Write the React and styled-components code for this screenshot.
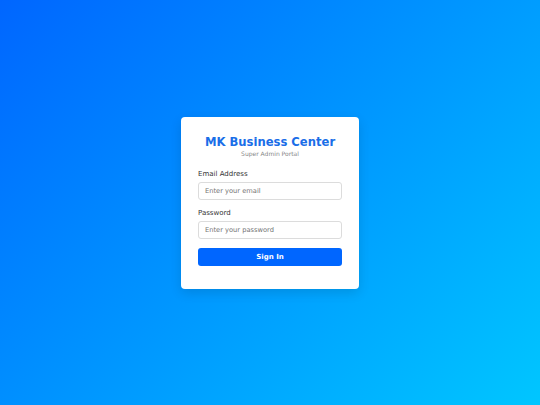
import React from "react";
import styled, { createGlobalStyle } from "styled-components";

const Global = createGlobalStyle`
  html, body { margin: 0; padding: 0; }
  body { font-family: "DejaVu Sans", sans-serif; }
  * { box-sizing: border-box; }
`;

const Page = styled.div`
  width: 540px;
  height: 405px;
  background: linear-gradient(135deg, #0066ff 0%, #00c6ff 100%);
  display: flex;
  align-items: center;
  justify-content: center;
`;

const Card = styled.div`
  width: 178px;
  background: #fff;
  border-radius: 4px;
  box-shadow: 0 4px 12px rgba(0, 0, 0, 0.12);
  padding: 17px 17px 23px;
  display: flex;
  flex-direction: column;
`;

const Header = styled.div`
  text-align: center;
  margin-bottom: 11px;
`;

const Title = styled.h1`
  margin: 0;
  font-size: 11.6px;
  line-height: 16px;
  font-weight: bold;
  color: #1a6ee8;
  white-space: nowrap;
`;

const Subtitle = styled.p`
  margin: 0;
  font-size: 6px;
  line-height: 8px;
  color: #888;
`;

const Field = styled.div`
  display: flex;
  flex-direction: column;
  margin-bottom: ${(p) => p.$mb || 8}px;
`;

const Label = styled.label`
  font-size: 7px;
  line-height: 10px;
  color: #333;
  margin-bottom: 3px;
`;

const Input = styled.input`
  height: 18px;
  border: 1px solid #dcdcdc;
  border-radius: 3px;
  padding: 0 6px;
  font-family: "DejaVu Sans", sans-serif;
  font-size: 6.7px;
  color: #333;
  outline: none;
  &::placeholder { color: #757575; }
`;

const Button = styled.button`
  height: 18px;
  border: none;
  border-radius: 3px;
  background: #0066ff;
  color: #fff;
  font-family: "DejaVu Sans", sans-serif;
  font-size: 7px;
  font-weight: bold;
  cursor: pointer;
`;

export default function App() {
  return (
    <>
      <Global />
      <Page>
        <Card>
          <Header>
            <Title>MK Business Center</Title>
            <Subtitle>Super Admin Portal</Subtitle>
          </Header>
          <Field>
            <Label>Email Address</Label>
            <Input type="email" placeholder="Enter your email" />
          </Field>
          <Field $mb={9}>
            <Label>Password</Label>
            <Input type="password" placeholder="Enter your password" />
          </Field>
          <Button>Sign In</Button>
        </Card>
      </Page>
    </>
  );
}
